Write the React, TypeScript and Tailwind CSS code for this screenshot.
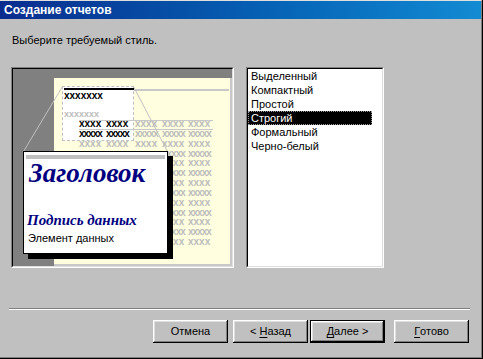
import React from "react";

const styles = ["Выделенный", "Компактный", "Простой", "Строгий", "Формальный", "Черно-белый"];
const selected = 3;

const colW = ["w-[27px]", "w-[29px]", "w-[27px]", "w-[26px]", "w-[26px]"];
const rows = Array.from({ length: 13 }, (_, i) => i);

function Button({ children, isDefault = false, className = "" }: { children: React.ReactNode; isDefault?: boolean; className?: string }) {
  const bevel = isDefault
    ? "shadow-[inset_0_0_0_1px_#000,inset_-2px_-2px_#000,inset_2px_2px_#fff,inset_-3px_-3px_#808080,inset_3px_3px_#dfdfdf]"
    : "shadow-[inset_-1px_-1px_#000,inset_1px_1px_#fff,inset_-2px_-2px_#808080,inset_2px_2px_#dfdfdf]";
  return (
    <button
      type="button"
      className={`w-[75px] h-[23px] bg-[#c0c0c0] text-[11px] leading-[13px] text-black flex items-center justify-center ${bevel} ${className}`}
    >
      {children}
    </button>
  );
}

function Preview() {
  return (
    <div className="w-[223px] h-[201px] border border-t-[#808080] border-l-[#808080] border-r-white border-b-white">
      <div className="relative h-full overflow-hidden bg-[#808080] border border-t-black border-l-black border-r-[#dfdfdf] border-b-[#dfdfdf]">
        {/* report page */}
        <div className="absolute left-[41px] top-[9px] right-0 bottom-0 bg-[#ffffe0] border-r-2 border-b-2 border-[#c8c8c8]" />
        <div className="absolute left-[120px] top-[20px] w-[96px] h-[2px] bg-[#c8c8c8]" />

        {/* page header, zoomed region */}
        <div className="absolute left-[49px] top-[17px] w-[72px] h-[55px] bg-white border border-dashed border-[#c0c0c0]" />
        <div className="absolute left-[51px] top-[19px] w-[70px] h-[2px] bg-black" />
        <div className="absolute left-[51px] top-[22px] text-[10px] leading-[10px] font-bold text-black">xxxxxxx</div>
        <div className="absolute left-[51px] top-[40px] text-[9px] leading-[10px] font-bold text-[#bcbcbc]">xxxxxxx</div>

        {/* table */}
        <div className="absolute left-[66px] top-[51px] w-[134px] h-px bg-[#c8c8c8]" />
        <div className="absolute left-[66px] top-[60px] w-[134px] h-px bg-[#c8c8c8]" />
        <div className="absolute left-[66px] top-[50px] flex flex-col">
          {rows.map((r) => (
            <div key={r} className="flex h-[9.85px] text-[10px] leading-[10px] font-bold">
              {colW.map((w, c) => (
                <span
                  key={c}
                  className={`${w} ${r % 2 === 1 ? "tracking-[-1px]" : ""} ${r < 2 && c < 2 ? "text-black" : "text-[#bcbcbc]"}`}
                >
                  {r >= 3 && c < 3 ? "" : r % 2 === 1 ? "xxxxx" : "xxxx"}
                </span>
              ))}
            </div>
          ))}
        </div>

        <svg className="absolute inset-0" width="221" height="199">
          <line x1="49.5" y1="17.5" x2="10.5" y2="82.5" stroke="#c0c0c0" strokeWidth="1" />
          <line x1="120.5" y1="17.5" x2="154.5" y2="82.5" stroke="#c0c0c0" strokeWidth="1" />
        </svg>

        {/* magnified popup */}
        <div className="absolute left-[10px] top-[82px] w-[145px] h-[103px] bg-white border border-black shadow-[5px_5px_0_#000] flex flex-col">
          <div className="mt-[3px] ml-[2px] w-[139px] h-[4px] bg-[#c0c0c0]" />
          <div className="pl-[5px] text-[27px] leading-[28px] font-bold italic text-[#000080] font-['Liberation_Serif','Times_New_Roman',serif]">
            Заголовок
          </div>
          <div className="mt-[25px] pl-[3px] text-[15px] leading-[16px] font-bold italic text-[#000080] font-['Liberation_Serif','Times_New_Roman',serif]">
            Подпись данных
          </div>
          <div className="mt-[4px] pl-[4px] text-[11px] leading-[13px] text-black">Элемент данных</div>
        </div>
      </div>
    </div>
  );
}

function StyleList() {
  return (
    <div className="ml-[12px] w-[138px] h-[201px] border border-t-[#808080] border-l-[#808080] border-r-white border-b-white">
      <div className="h-full bg-white border border-t-black border-l-black border-r-[#dfdfdf] border-b-[#dfdfdf] flex flex-col">
        {styles.map((s, i) => (
          <div
            key={s}
            className={`w-[124px] h-[14px] pl-[3px] text-[11px] leading-[14px] ${
              i === selected
                ? "bg-black text-white outline-1 outline-dotted outline-[#9a9a9a] -outline-offset-1"
                : "text-black"
            }`}
          >
            {s}
          </div>
        ))}
      </div>
    </div>
  );
}

export default function App() {
  return (
    <div className="w-[483px] h-[359px] bg-black pr-px pb-px font-['Liberation_Sans',Arial,sans-serif]">
      <div className="h-full bg-[#c0c0c0] border-t border-t-[#dfdfdf] border-r border-b border-r-[#808080] border-b-[#808080] flex flex-col">
        <div className="h-[18px] bg-gradient-to-r from-[#0a2c8e] to-[#138bd3] flex items-center pl-[4px]">
          <span className="text-white font-bold text-[12px] leading-[14px]">Создание отчетов</span>
        </div>

        <div className="mt-[15px] pl-[12px] text-[11px] leading-[13px] text-black">Выберите требуемый стиль.</div>

        <div className="mt-[20px] pl-[11px] flex">
          <Preview />
          <StyleList />
        </div>

        <div className="mt-[40px] ml-[9px] w-[461px] h-[2px] border-t border-t-[#808080] border-b border-b-white" />

        <div className="mt-[10px] flex">
          <Button className="ml-[153px]">Отмена</Button>
          <Button className="ml-[5px]">
            &lt;&nbsp;<span className="underline underline-offset-[2px]">Н</span>азад
          </Button>
          <Button isDefault className="ml-[2px]">
            <span className="underline underline-offset-[2px]">Д</span>алее&nbsp;&gt;
          </Button>
          <Button className="ml-[9px]">
            <span className="underline underline-offset-[2px]">Г</span>отово
          </Button>
        </div>
      </div>
    </div>
  );
}
